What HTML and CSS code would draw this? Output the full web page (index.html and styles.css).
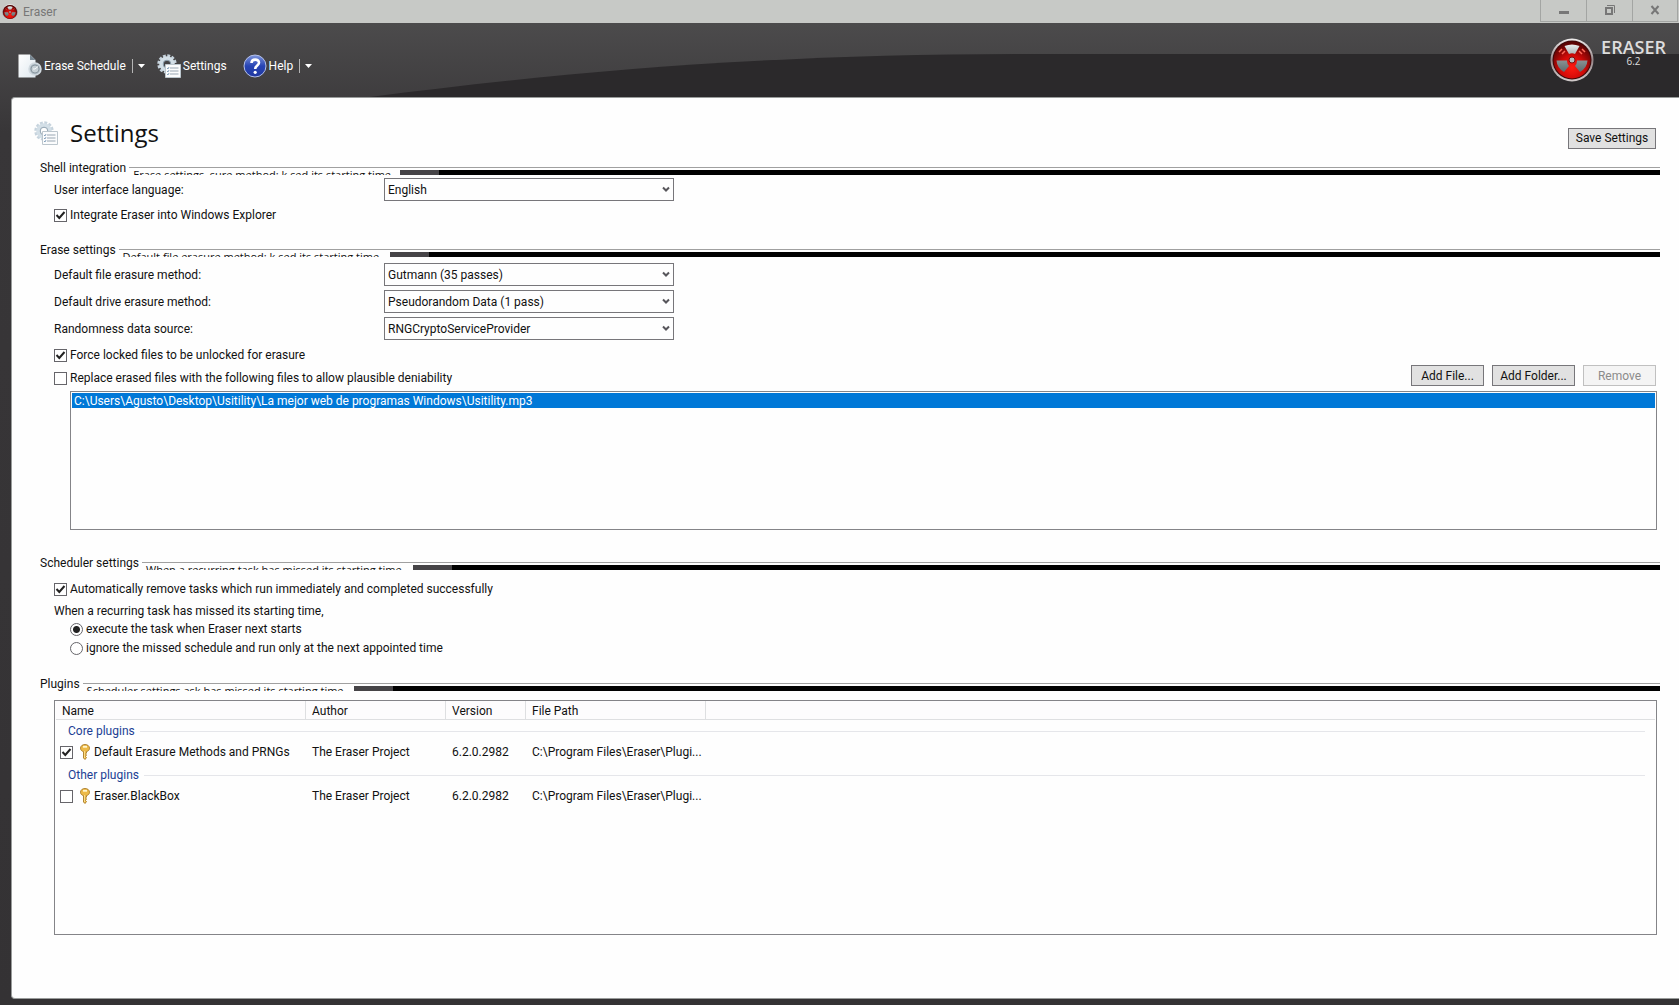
FILE: index.html
```html
<!DOCTYPE html>
<html lang="en">
<head>
<meta charset="utf-8">
<title>Eraser</title>
<link rel="stylesheet" href="styles.css">
</head>
<body>
<svg class="defs" width="0" height="0" aria-hidden="true">
  <defs>
    <radialGradient id="red" cx="50%" cy="70%" r="65%">
      <stop offset="0" stop-color="#ff1a10"/><stop offset="0.5" stop-color="#d00a08"/><stop offset="1" stop-color="#5c0404"/>
    </radialGradient>
    <linearGradient id="rim" x1="0" y1="0" x2="0" y2="1">
      <stop offset="0" stop-color="#f0eeee"/><stop offset="0.5" stop-color="#96878a"/><stop offset="1" stop-color="#d2cccc"/>
    </linearGradient>
    <linearGradient id="blade" gradientUnits="userSpaceOnUse" x1="0" y1="6" x2="0" y2="35">
      <stop offset="0" stop-color="#eef2f2"/><stop offset="0.5" stop-color="#8f999b"/><stop offset="1" stop-color="#5c6567"/>
    </linearGradient>
    <linearGradient id="blue" x1="0" y1="0" x2="0" y2="1">
      <stop offset="0" stop-color="#7f96dc"/><stop offset="0.5" stop-color="#2744b4"/><stop offset="1" stop-color="#2038a0"/>
    </linearGradient>
    <linearGradient id="page" x1="0" y1="0" x2="1" y2="1">
      <stop offset="0" stop-color="#ffffff"/><stop offset="1" stop-color="#dfe8ef"/>
    </linearGradient>
    <symbol id="logo" viewBox="0 0 44 44">
      <circle cx="22" cy="22" r="21.5" fill="url(#rim)"/>
      <circle cx="22" cy="22" r="19.5" fill="#3c0808"/>
      <circle cx="22" cy="22" r="18.5" fill="url(#red)"/>
      <path d="M14.500 8Q22 5 29.500 8L25 16Q22 14.500 19 16Z" fill="url(#blade)"/>
      <path d="M6.500 22.500H17Q17 26 19 28L14 34Q7 30 6.500 22.500Z" fill="url(#blade)"/>
      <path d="M37.500 22.500H27Q27 26 25 28L30 34Q37 30 37.500 22.500Z" fill="url(#blade)"/>
      <circle cx="22" cy="22" r="3" fill="#b9bdbe" stroke="#7b1010"/>
      <path d="M9 14l3-3M12 16l3-3M32 11l3 3M29 13l3 3" stroke="#ff6a5a" stroke-width="1.500"/>
    </symbol>
    <symbol id="gear" viewBox="0 0 24 24">
      <circle cx="10" cy="10" r="8.200" fill="none" stroke="#c6d3dd" stroke-width="3" stroke-dasharray="2.800 1.500"/>
      <circle cx="10" cy="10" r="5.800" fill="none" stroke="#d3dfe7" stroke-width="4"/>
      <circle cx="10" cy="10" r="3.800" fill="none" stroke="#8fa2b0"/>
      <path d="M8.500 10.500H23.500V23.500H8.500Z" fill="#fbfcfd" stroke="#bcc6cd"/>
      <path d="M13 14H21.500M13 17H21.500M13 20H21.500" stroke="#99a6b2"/>
      <path d="M10 14l1 1 1-2M10 17l1 1 1-2M10 20l1 1 1-2" stroke="#6f8fae" fill="none" stroke-width="0.800"/>
    </symbol>
    <symbol id="key" viewBox="0 0 10 16">
      <path d="M5 .5C7.500 .5 9.500 2 9.500 4.200C9.500 6 8.200 7.200 6.500 7.600V9L5.500 10L6.500 11L5.500 12.500L6.500 13.500L5 15.500L3.500 14V7.600C1.800 7.200 .5 6 .5 4.200C.5 2 2.500 .5 5 .5Z" fill="#edba48" stroke="#a97b25" stroke-width="0.900"/>
      <path d="M3 2.800H7" stroke="#fff6cf" stroke-width="1.800"/><path d="M4.500 7V14" stroke="#ffe697" stroke-width="0.800"/>
    </symbol>
    <symbol id="chevron" viewBox="0 0 8 7"><path d="M1 1.500L4 4.500L7 1.500" fill="none" stroke="#57565b" stroke-width="2"/></symbol>
    <symbol id="caret" viewBox="0 0 7 4"><path d="M0 0H7L3.500 4Z" fill="#fff"/></symbol>
  </defs>
</svg>

<header class="titlebar">
  <svg class="titlebar-icon"><use href="#logo"/></svg>
  <span class="titlebar-name">Eraser</span>
  <div class="window-buttons">
    <button type="button" aria-label="Minimize"><svg width="10" height="10" viewBox="0 0 10 10"><path d="M0 7.500H10" stroke="#777" stroke-width="3"/></svg></button>
    <button type="button" aria-label="Restore"><svg width="10" height="10" viewBox="0 0 10 10"><path d="M2 .5H9.500V8" fill="none" stroke="#777"/><path d="M1 3H7V9H1Z" fill="none" stroke="#777" stroke-width="2"/></svg></button>
    <button type="button" aria-label="Close"><svg width="10" height="10" viewBox="0 0 10 10"><path d="M1.500 1L8.500 9M8.500 1L1.500 9" stroke="#777" stroke-width="2"/></svg></button>
  </div>
</header>

<div class="shell">
  <div class="banner">
    <svg class="swoosh" viewBox="0 0 1310 43" preserveAspectRatio="none" aria-hidden="true"><path d="M0 43C200 17 400 0 660 0H1310V43Z" fill="#2b292b"/></svg>
    <nav class="toolbar">
      <button type="button" class="tool">
        <svg width="24" height="24" viewBox="0 0 24 24"><path d="M.5 .5H12L17.500 6V23.500H.5Z" fill="url(#page)"/><path d="M12 .5V6H17.500Z" fill="#788792"/><circle cx="17" cy="15" r="6" fill="#aebbc4" stroke="#d2dae0" stroke-width="1.500"/><circle cx="17" cy="15" r="4" fill="#c5cfd5" stroke="#7e8b94" stroke-width="0.800"/><path d="M17 15L20 12.500M17 15H15" stroke="#f8fafb"/></svg>
        <span>Erase Schedule</span>
      </button>
      <button type="button" class="drop" aria-label="Erase Schedule menu"><svg width="7" height="4"><use href="#caret"/></svg></button>
      <button type="button" class="tool settings-tool"><svg width="24" height="24"><use href="#gear"/></svg><span>Settings</span></button>
      <button type="button" class="tool help-tool">
        <svg width="24" height="24" viewBox="0 0 24 24"><circle cx="12" cy="12" r="11" fill="url(#blue)" stroke="#b4c0e8"/><path d="M8.500 9C8.500 4.500 16 4.500 16 8.800C16 11.500 12.200 11.500 12.200 15" fill="none" stroke="#fff" stroke-width="2.600"/><circle cx="12.200" cy="18.300" r="1.600" fill="#fff"/></svg>
        <span>Help</span>
      </button>
      <button type="button" class="drop" aria-label="Help menu"><svg width="7" height="4"><use href="#caret"/></svg></button>
    </nav>
    <div class="brand">
      <svg class="brand-logo"><use href="#logo"/></svg>
      <div class="brand-text"><span class="brand-name">ERASER</span><span class="brand-version">6.2</span></div>
    </div>
  </div>

  <main class="panel">
    <div class="page-head">
      <svg class="page-icon"><use href="#gear"/></svg>
      <h1>Settings</h1>
      <button type="button" class="btn save">Save Settings</button>
    </div>

    <section>
      <div class="group-head"><h2>Shell integration</h2><div class="rule"><div class="strip" aria-hidden="true"><span>Erase settings, sure method: k sed its starting time,</span></div></div></div>
      <div class="fields shell-fields">
        <label for="lang">User interface language:</label>
        <div class="select"><select id="lang"><option>English</option></select><svg width="8" height="7"><use href="#chevron"/></svg></div>
      </div>
      <label class="check integrate"><input type="checkbox" checked>Integrate Eraser into Windows Explorer</label>
    </section>

    <section class="erase">
      <div class="group-head"><h2>Erase settings</h2><div class="rule"><div class="strip" aria-hidden="true"><span>Default file erasure method: k sed its starting time,</span></div></div></div>
      <div class="fields erase-fields">
        <label for="file">Default file erasure method:</label>
        <div class="select"><select id="file"><option>Gutmann (35 passes)</option></select><svg width="8" height="7"><use href="#chevron"/></svg></div>
        <label for="drive">Default drive erasure method:</label>
        <div class="select"><select id="drive"><option>Pseudorandom Data (1 pass)</option></select><svg width="8" height="7"><use href="#chevron"/></svg></div>
        <label for="rng">Randomness data source:</label>
        <div class="select"><select id="rng"><option>RNGCryptoServiceProvider</option></select><svg width="8" height="7"><use href="#chevron"/></svg></div>
      </div>
      <label class="check force"><input type="checkbox" checked>Force locked files to be unlocked for erasure</label>
      <div class="replace-row">
        <label class="check"><input type="checkbox">Replace erased files with the following files to allow plausible deniability</label>
        <div class="buttons">
          <button type="button" class="btn">Add File...</button>
          <button type="button" class="btn folder">Add Folder...</button>
          <button type="button" class="btn" disabled>Remove</button>
        </div>
      </div>
      <ul class="file-list"><li>C:\Users\Agusto\Desktop\Usitility\La mejor web de programas Windows\Usitility.mp3</li></ul>
    </section>

    <section class="scheduler">
      <div class="group-head"><h2>Scheduler settings</h2><div class="rule"><div class="strip" aria-hidden="true"><span>When a recurring task has missed its starting time,</span></div></div></div>
      <label class="check auto"><input type="checkbox" checked>Automatically remove tasks which run immediately and completed successfully</label>
      <fieldset>
        <legend>When a recurring task has missed its starting time,</legend>
        <label class="radio"><input type="radio" name="missed" checked>execute the task when Eraser next starts</label>
        <label class="radio"><input type="radio" name="missed">ignore the missed schedule and run only at the next appointed time</label>
      </fieldset>
    </section>

    <section class="plugins">
      <div class="group-head"><h2>Plugins</h2><div class="rule"><div class="strip" aria-hidden="true"><span>Scheduler settings ask has missed its starting time,</span></div></div></div>
      <div class="plugin-box">
        <table>
          <colgroup><col class="c-name"><col class="c-author"><col class="c-version"><col class="c-path"><col></colgroup>
          <thead><tr><th>Name</th><th>Author</th><th>Version</th><th>File Path</th><td></td></tr></thead>
          <tbody>
            <tr class="plugin-group"><th colspan="5"><div>Core plugins</div></th></tr>
            <tr><td><label class="plugin"><input type="checkbox" checked><svg width="10" height="16"><use href="#key"/></svg>Default Erasure Methods and PRNGs</label></td><td>The Eraser Project</td><td>6.2.0.2982</td><td>C:\Program Files\Eraser\Plugi...</td><td></td></tr>
            <tr class="plugin-group"><th colspan="5"><div>Other plugins</div></th></tr>
            <tr><td><label class="plugin"><input type="checkbox"><svg width="10" height="16"><use href="#key"/></svg>Eraser.BlackBox</label></td><td>The Eraser Project</td><td>6.2.0.2982</td><td>C:\Program Files\Eraser\Plugi...</td><td></td></tr>
          </tbody>
        </table>
      </div>
    </section>
  </main>
</div>
</body>
</html>
```
FILE: styles.css
```css
* { box-sizing: border-box; }
body {
  margin: 0;
  min-height: 100vh;
  display: flex;
  flex-direction: column;
  font: 12px/16px Roboto, "Open Sans", sans-serif;
  color: #111;
}
button, input, select { font: inherit; color: inherit; margin: 0; }
h1, h2 { margin: 0; font-weight: 400; }
svg { flex: none; display: block; }
.defs { position: absolute; }

/* Title bar */
.titlebar { display: flex; align-items: center; height: 23px; padding-left: 2px; background: #c7c9c6; }
.titlebar-icon { width: 16px; height: 16px; }
.titlebar-name { margin-left: 5px; color: #777; }
.window-buttons { display: flex; align-self: flex-start; margin-left: auto; padding-right: 1px; }
.window-buttons button {
  display: grid; place-items: center;
  width: 46px; height: 22px; padding: 0 0 2px;
  background: none; border: solid #a3a5a3; border-width: 0 0 1px 1px;
}
.window-buttons button:last-child { border-right-width: 1px; }

/* Dark frame and banner */
.shell {
  flex: 1; display: flex; flex-direction: column;
  padding: 0 0 6px 11px;
  background: linear-gradient(#4c4b4c, #383638 110px, #343234);
}
.banner { position: relative; display: flex; justify-content: space-between; height: 74px; }
.swoosh { position: absolute; right: 0; bottom: 0; width: 78.500%; height: 43px; }
.toolbar { position: relative; display: flex; align-items: center; height: 24px; margin-top: 31px; padding-left: 7px; color: #fff; }
.tool { display: flex; align-items: center; gap: 2px; padding: 0; background: none; border: 0; }
.drop { height: 14px; margin-left: 6px; padding: 0 0 0 5px; background: none; border: 0; border-left: 1px solid #b5b5b5; }
.settings-tool { margin-left: 12px; }
.help-tool { margin-left: 16px; }
.brand { position: relative; display: flex; gap: 7px; margin: 15px 13px 0 0; font-family: "Open Sans", sans-serif; }
.brand-logo { width: 44px; height: 44px; }
.brand-text { display: flex; flex-direction: column; align-items: center; color: #ddd; }
.brand-name { font-size: 18px; line-height: 18px; font-weight: 600; }
.brand-version { font-size: 10px; line-height: 10px; }

/* White page */
.panel { flex: 1; padding: 19px 19px 20px 28px; background: #fefefe; border: solid #999c9b; border-width: 1px 0 1px 1px; border-radius: 4px 0 0 4px; }
.page-head { display: flex; align-items: center; height: 32px; margin-bottom: 11px; }
.page-icon { width: 24px; height: 24px; margin-left: -6px; }
h1 { margin-left: 12px; font-family: "Open Sans", sans-serif; font-size: 24px; line-height: 32px; }
.btn { width: 73px; height: 21px; padding: 0; background: #e1e1e1; border: 1px solid #77767a; line-height: 16px; white-space: nowrap; }
.btn.folder { width: 83px; }
.btn.save { width: 88px; margin: 10px 4px 0 auto; }
.btn:disabled { background: #f4f4f4; border-color: #c0c0c0; color: #8b8b8b; }

.group-head { display: flex; gap: 3px; height: 16px; }
h2 { font-size: 12px; line-height: 16px; }
.rule { flex: 1; margin-top: 7px; padding-top: 2px; border-top: 1px solid #a0a0a0; height: 8px; }
.strip { height: 5px; overflow: hidden; background: linear-gradient(90deg, #fefefe 271px, #464447 271px 310px, #000 310px); }
.strip span { display: block; margin: -3px 0 0 4px; font-family: "Open Sans", sans-serif; font-size: 11px; white-space: nowrap; }

.fields { display: grid; grid-template-columns: 330px 290px; row-gap: 4px; align-items: center; margin-left: 14px; }
.shell-fields { margin-top: 2px; }
.erase-fields { margin-top: 5px; }
.select { display: grid; align-items: center; }
.select > * { grid-area: 1 / 1; }
.select svg { justify-self: end; margin-right: 4px; pointer-events: none; }
select { appearance: none; width: 100%; height: 23px; padding: 0 20px 0 3px; background: #fefefe; border: 1px solid #77767a; border-radius: 0; }

.check, .radio, .plugin { display: flex; align-items: center; width: max-content; }
.check { gap: 3px; margin-left: 14px; }
input { appearance: none; flex: none; width: 13px; height: 13px; border: 1px solid #66656a; background: #fff; }
input[type="checkbox"]:checked { background: #fff url("data:image/svg+xml,%3Csvg xmlns='http://www.w3.org/2000/svg' viewBox='0 0 11 11'%3E%3Cpath d='M1.500 5L4.300 8L9.500 2' fill='none' stroke='%23222' stroke-width='2'/%3E%3C/svg%3E") center / 11px 11px; }
input[type="radio"] { border-radius: 50%; }
input[type="radio"]:checked { background: radial-gradient(circle, #222 3px, #fff 4px); }
.integrate { margin-top: 6px; }
.force { margin-top: 7px; }
.erase { margin-top: 19px; }
.replace-row { display: flex; justify-content: space-between; align-items: flex-end; margin-top: 2px; }
.buttons { display: flex; gap: 8px; margin-right: 4px; }
.file-list { list-style: none; height: 139px; margin: 5px 3px 0 30px; padding: 1px; border: 1px solid #848488; }
.file-list li { height: 15px; padding-left: 2px; line-height: 16px; background: #0078d7; color: #fff; }

.scheduler { margin-top: 25px; }
.auto { margin-top: 10px; }
fieldset { margin: 6px 0 0 14px; padding: 0; border: 0; }
legend { padding: 0; }
.radio { gap: 3px; margin: 2px 0 3px 16px; }

.plugins { margin-top: 17px; }
.plugin-box { height: 235px; margin: 8px 3px 0 14px; padding: 0 1px; border: 1px solid #848488; }
table { width: 100%; table-layout: fixed; border-collapse: separate; border-spacing: 0; }
th, td { height: 22px; padding: 0 0 0 6px; font-weight: 400; text-align: left; white-space: nowrap; }
thead th, thead td { height: 19px; border-bottom: 1px solid #dedfe1; background: #fdfcfd; }
thead th { padding-top: 2px; border-right: 1px solid #dedfe1; }
.c-name { width: 250px; }
.c-author { width: 140px; }
.c-version { width: 80px; }
.c-path { width: 180px; }
tbody td { padding-bottom: 2px; }
.plugin { margin-left: -2px; }
.plugin svg { margin: 0 4px 0 7px; }
.plugin-group th { padding: 0 10px 0 12px; color: #1c3f94; }
.plugin-group div { display: flex; align-items: center; gap: 5px; }
.plugin-group div::after { content: ""; flex: 1; border-top: 1px solid #e5e6ea; }
```
